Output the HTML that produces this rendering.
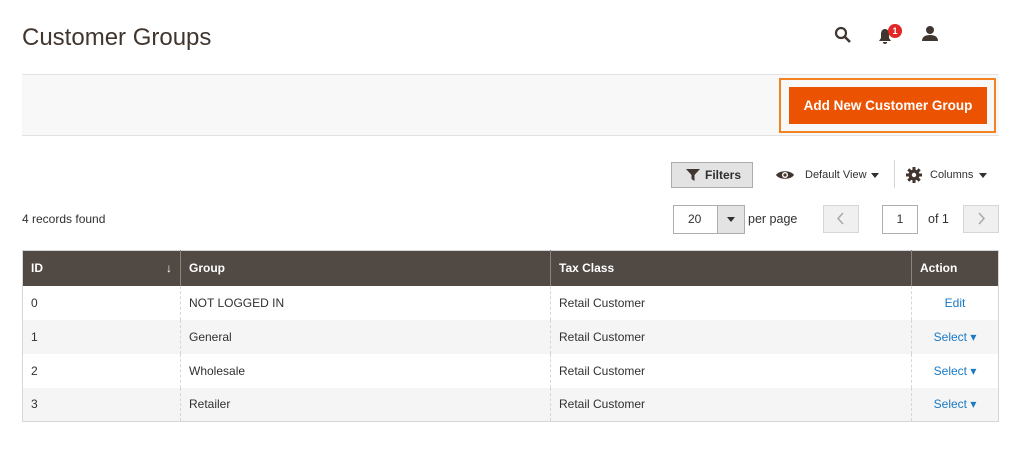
<!DOCTYPE html>
<html><head><style>
*{box-sizing:border-box;margin:0;padding:0}
body{width:1024px;height:449px;background:#fff;font-family:"Liberation Sans",sans-serif;color:#303030;position:relative;overflow:hidden;font-size:12px}
.a{position:absolute}
.title{left:22px;top:24px;font-size:24px;color:#41362f}
.bar{left:22px;top:74px;width:977px;height:62px;background:#f8f8f8;border-top:1px solid #e3e3e3;border-bottom:1px solid #e3e3e3}
.outl{left:779px;top:78px;width:217px;height:55px;border:2px solid #f58220}
.btn{left:789px;top:87px;width:198px;height:37px;background:#eb5202;color:#fff;font-size:13.5px;font-weight:bold;text-align:center;line-height:37px}
.box{border:1px solid #adadad;background:#fff;text-align:center}
table{position:absolute;left:22px;top:250px;width:977px;border-collapse:collapse;border:1px solid #d6d6d6}
th{background:#514943;color:#fff;text-align:left;height:35px;padding-left:8px;font-size:12px;border-left:1px solid #8a837f}
td{height:34px;padding-left:8px;border-left:1px dashed #d6d6d6;font-size:12px}
tr:nth-child(odd) td{background:#f5f5f5}
.lk{color:#1979c3}
</style></head><body>
<div class="a title">Customer Groups</div>
<svg class="a" style="left:834px;top:26px" width="18" height="18" viewBox="0 0 18 18"><circle cx="7" cy="7" r="5" fill="none" stroke="#41362f" stroke-width="2.2"/><path d="M10.5 10.5L16 16" stroke="#41362f" stroke-width="2.6"/></svg>
<svg class="a" style="left:878px;top:28px" width="14" height="16" viewBox="0 0 14 16"><path d="M7 1C4 1 3 4 3 6v4L1 13h12l-2-3V6C11 4 10 1 7 1z M5 14a2 2 0 0 0 4 0z" fill="#41362f"/></svg>
<div class="a" style="left:888px;top:24px;width:14px;height:14px;border-radius:7px;background:#e22626;color:#fff;font-size:9px;font-weight:bold;text-align:center;line-height:14px">1</div>
<svg class="a" style="left:921px;top:25px" width="18" height="17" viewBox="0 0 18 17"><circle cx="9" cy="5" r="4" fill="#41362f"/><path d="M1 16c0-4 3-6 8-6s8 2 8 6z" fill="#41362f"/></svg>
<div class="a bar"></div>
<div class="a outl"></div>
<div class="a btn">Add New Customer Group</div>
<div class="a" style="left:671px;top:162px;width:82px;height:26px;background:#e3e3e3;border:1px solid #adadad;font-size:12px;font-weight:bold;color:#303030;line-height:24px;padding-left:33px">Filters</div>
<svg class="a" style="left:686px;top:168px" width="14" height="14" viewBox="0 0 14 14"><path d="M0 1h14L8.5 7v6L5.5 11V7z" fill="#41362f"/></svg>
<svg class="a" style="left:775px;top:169px" width="20" height="12" viewBox="0 0 20 12"><path d="M1 6C4 1 16 1 19 6C16 11 4 11 1 6z" fill="#41362f"/><circle cx="10" cy="6" r="3" fill="#fff"/><circle cx="10" cy="6" r="1.6" fill="#41362f"/></svg>
<div class="a" style="left:805px;top:169px;font-size:11px;color:#303030">Default View</div>
<svg class="a" style="left:871px;top:173px" width="8" height="5"><path d="M0 0h8L4 5z" fill="#303030"/></svg>
<div class="a" style="left:894px;top:160px;width:1px;height:28px;background:#d6d6d6"></div>
<svg class="a" style="left:906px;top:167px" width="16" height="16" viewBox="0 0 16 16"><circle cx="8" cy="8" r="5.5" fill="#41362f"/><path d="M8 0v16M0 8h16M2.3 2.3l11.4 11.4M13.7 2.3L2.3 13.7" stroke="#41362f" stroke-width="3"/><circle cx="8" cy="8" r="2.2" fill="#fff"/></svg>
<div class="a" style="left:930px;top:169px;font-size:11px;color:#303030">Columns</div>
<svg class="a" style="left:979px;top:173px" width="8" height="5"><path d="M0 0h8L4 5z" fill="#303030"/></svg>
<div class="a" style="left:22px;top:212px;font-size:12px;color:#303030">4 records found</div>
<div class="a box" style="left:673px;top:205px;width:72px;height:29px;line-height:27px;text-align:left;padding-left:14px;font-size:12px">20</div>
<div class="a" style="left:717px;top:206px;width:27px;height:27px;background:#e3e3e3;border-left:1px solid #adadad"></div>
<svg class="a" style="left:727px;top:217px" width="8" height="5"><path d="M0 0h8L4 5z" fill="#303030"/></svg>
<div class="a" style="left:748px;top:212px;font-size:12.5px">per page</div>
<div class="a" style="left:823px;top:205px;width:36px;height:28px;background:#f0f0f0;border:1px solid #d6d6d6"></div>
<svg class="a" style="left:836px;top:212px" width="8" height="13"><path d="M7 1L2 6.5L7 12" fill="none" stroke="#a9a9a9" stroke-width="1.5"/></svg>
<div class="a box" style="left:882px;top:205px;width:36px;height:29px;line-height:27px;font-size:12px">1</div>
<div class="a" style="left:928px;top:212px;font-size:12.5px">of 1</div>
<div class="a" style="left:963px;top:205px;width:36px;height:28px;background:#f0f0f0;border:1px solid #d6d6d6"></div>
<svg class="a" style="left:978px;top:212px" width="8" height="13"><path d="M1 1L6 6.5L1 12" fill="none" stroke="#a9a9a9" stroke-width="1.5"/></svg>
<table>
<tr><th style="width:158px;border-left:none">ID<span style="float:right;margin-right:8px;font-weight:normal">&#8595;</span></th><th style="width:370px">Group</th><th style="width:361px">Tax Class</th><th>Action</th></tr>
<tr><td style="border-left:none">0</td><td>NOT LOGGED IN</td><td>Retail Customer</td><td style="text-align:center;padding-left:0" class="lk">Edit</td></tr>
<tr><td style="border-left:none">1</td><td>General</td><td>Retail Customer</td><td style="text-align:center;padding-left:0" class="lk">Select &#9662;</td></tr>
<tr><td style="border-left:none">2</td><td>Wholesale</td><td>Retail Customer</td><td style="text-align:center;padding-left:0" class="lk">Select &#9662;</td></tr>
<tr><td style="border-left:none">3</td><td>Retailer</td><td>Retail Customer</td><td style="text-align:center;padding-left:0" class="lk">Select &#9662;</td></tr>
</table>
</body></html>
